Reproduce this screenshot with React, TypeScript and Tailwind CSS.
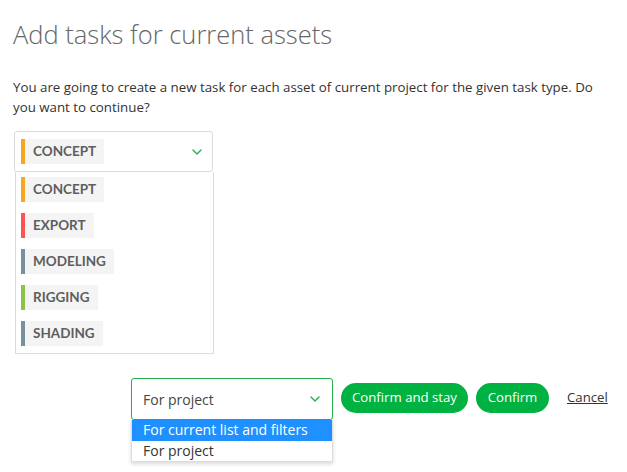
import React from 'react'

const taskTypes = [
  { name: 'CONCEPT', color: '#f5a623' },
  { name: 'EXPORT', color: '#ff5252' },
  { name: 'MODELING', color: '#78909c' },
  { name: 'RIGGING', color: '#8bc34a' },
  { name: 'SHADING', color: '#78909c' },
]

function Chevron({ className }: { className?: string }) {
  return (
    <svg className={className} width="10" height="6" viewBox="0 0 10 6" fill="none">
      <path d="M1 1l4 4 4-4" stroke="#22b14c" strokeWidth="1.4" strokeLinecap="round" strokeLinejoin="round" />
    </svg>
  )
}

function TaskTag({ name, color }: { name: string; color: string }) {
  return (
    <div className="flex h-[25px] items-stretch">
      <span className="w-[4px]" style={{ background: color }} />
      <span className="flex items-center bg-[#f4f4f4] px-[8px] font-['Lato',sans-serif] text-[13.5px] font-bold text-[#5e5e5e]">
        {name}
      </span>
    </div>
  )
}

export default function App() {
  return (
    <div className="h-[472px] w-[627px] overflow-hidden bg-white px-[13px] pt-[14px] font-['Open_Sans',sans-serif] text-[#333]">
      <h1 className="text-[25.5px] leading-[40px] font-light text-[#666]">Add tasks for current assets</h1>

      <p className="mt-[23px] w-[600px] text-[13.3px] leading-[20px] text-[#333]">
        You are going to create a new task for each asset of current project for the given task type. Do you want to continue?
      </p>

      <div className="mt-[14px] ml-[1px] w-[199px]">
        <div className="flex h-[41px] items-center justify-between rounded-[3px] border border-[#dcdcdc] pr-[10px] pl-[6px]">
          <TaskTag name="CONCEPT" color="#f5a623" />
          <Chevron />
        </div>
        <div className="ml-[1px] flex w-[199px] flex-col gap-[11px] border border-t-0 border-[#dcdcdc] px-[5px] pt-[5px] pb-[7px]">
          {taskTypes.map((t) => (
            <TaskTag key={t.name} name={t.name} color={t.color} />
          ))}
        </div>
      </div>

      <div className="mt-[24px] flex items-start pl-[118px]">
        <div className="w-[202px] shrink-0">
          <div className="flex h-[42px] items-center justify-between rounded-[3px] border border-[#22b14c] pr-[12px] pl-[11px] text-[14px] text-[#444]">
            <span>For project</span>
            <Chevron />
          </div>
          <div className="border border-t-0 border-[#ddd] text-[14px] leading-[20.5px] text-[#333] shadow-[0_2px_4px_rgba(0,0,0,0.15)]">
            <div className="bg-[#1e90ff] px-[11px] text-white">For current list and filters</div>
            <div className="bg-white px-[11px]">For project</div>
          </div>
        </div>
        <button className="mt-[5px] ml-[8px] h-[30px] w-[127px] shrink-0 rounded-full bg-[#00b242] text-[13.2px] whitespace-nowrap text-white">
          Confirm and stay
        </button>
        <button className="mt-[5px] ml-[8px] h-[30px] w-[73px] shrink-0 rounded-full bg-[#00b242] text-[13.2px] whitespace-nowrap text-white">
          Confirm
        </button>
        <button className="mt-[5px] ml-[18px] h-[30px] text-[13.2px] whitespace-nowrap text-[#333] underline">Cancel</button>
      </div>
    </div>
  )
}
